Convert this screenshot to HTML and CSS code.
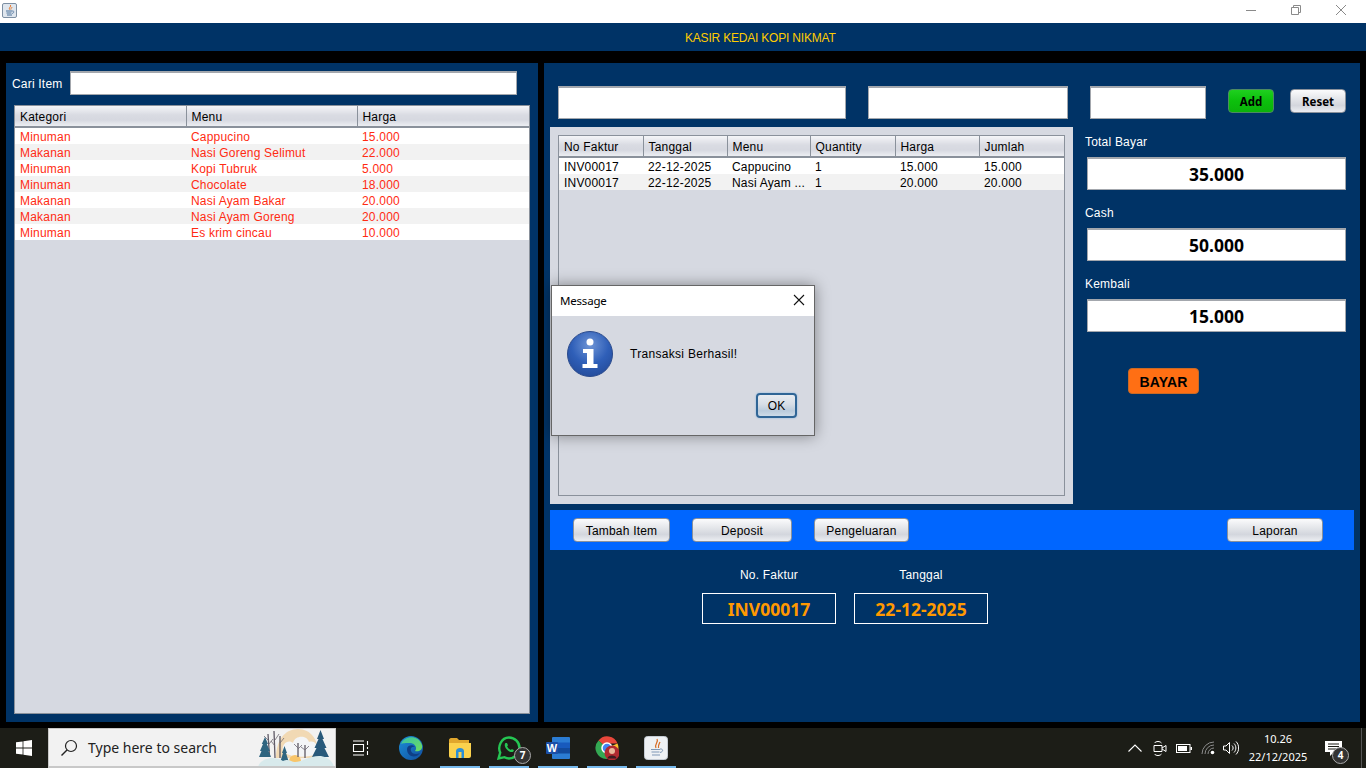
FILE: index.html
```html
<!DOCTYPE html>
<html lang="en">
<head>
    <meta charset="UTF-8">
    <title>Kasir Kedai Kopi Nikmat</title>
    <link rel="stylesheet" href="styles.css">
</head>
<body>

    <!-- Window title bar -->
    <div class="titlebar">
        <span class="app-icon">
            <svg width="15" height="15" viewBox="0 0 15 15">
                <rect x="0.5" y="0.5" width="14" height="14" rx="1.5" fill="#dfe6ee" stroke="#7d8fa3"/>
                <path d="M8.5 2C9.5 3.6 6.5 4.6 7.5 6.6M10 4C9.8 5.2 8.6 5.4 8.8 6.6" fill="none" stroke="#e8792b" stroke-width="1"/>
                <path d="M4 8H10M4.500 10H9.500M5 12H10" fill="none" stroke="#4b7099" stroke-width="1"/>
                <path d="M10 8C12.500 7.500 12.500 10 10 10.500" fill="none" stroke="#4b7099" stroke-width="0.8"/>
            </svg>
        </span>
        <div class="win-controls">
            <svg width="10" height="10" viewBox="0 0 10 10"><path d="M0 5.500H10" stroke="#8a8a8a"/></svg>
            <svg width="10" height="10" viewBox="0 0 10 10"><path d="M0.500 2.500H7.500V9.500H0.500ZM2.500 2.500V0.500H9.500V7.500H7.500" fill="none" stroke="#8a8a8a"/></svg>
            <svg width="10" height="10" viewBox="0 0 10 10"><path d="M0 0L10 10M10 0L0 10" stroke="#8a8a8a"/></svg>
        </div>
    </div>

    <!-- Header -->
    <div class="app-header">KASIR KEDAI KOPI NIKMAT</div>

    <div class="main">

        <!-- Item list -->
        <div class="panel left-panel">
            <div class="search-row">
                <label class="search-label">Cari Item</label>
                <input class="field search-input" type="text">
            </div>
            <div class="table-box item-table">
                <table>
                    <thead>
                        <tr><th>Kategori</th><th>Menu</th><th>Harga</th></tr>
                    </thead>
                    <tbody>
                        <tr><td>Minuman</td><td>Cappucino</td><td>15.000</td></tr>
                        <tr><td>Makanan</td><td>Nasi Goreng Selimut</td><td>22.000</td></tr>
                        <tr><td>Minuman</td><td>Kopi Tubruk</td><td>5.000</td></tr>
                        <tr><td>Minuman</td><td>Chocolate</td><td>18.000</td></tr>
                        <tr><td>Makanan</td><td>Nasi Ayam Bakar</td><td>20.000</td></tr>
                        <tr><td>Makanan</td><td>Nasi Ayam Goreng</td><td>20.000</td></tr>
                        <tr><td>Minuman</td><td>Es krim cincau</td><td>10.000</td></tr>
                    </tbody>
                </table>
            </div>
        </div>

        <!-- Transaction -->
        <div class="panel right-panel">
            <div class="entry-row">
                <input class="field entry-menu" type="text">
                <input class="field entry-price" type="text">
                <input class="field entry-qty" type="text">
                <button class="btn btn-add">Add</button>
                <button class="btn btn-reset">Reset</button>
            </div>

            <div class="middle-row">
                <div class="cart-panel">
                    <div class="table-box cart-table">
                        <table>
                            <thead>
                                <tr><th>No Faktur</th><th>Tanggal</th><th>Menu</th><th>Quantity</th><th>Harga</th><th>Jumlah</th></tr>
                            </thead>
                            <tbody>
                                <tr><td>INV00017</td><td>22-12-2025</td><td>Cappucino</td><td>1</td><td>15.000</td><td>15.000</td></tr>
                                <tr><td>INV00017</td><td>22-12-2025</td><td>Nasi Ayam ...</td><td>1</td><td>20.000</td><td>20.000</td></tr>
                            </tbody>
                        </table>
                    </div>
                </div>
                <div class="totals">
                    <div class="total-label">Total Bayar</div>
                    <div class="field total-value">35.000</div>
                    <div class="total-label">Cash</div>
                    <div class="field total-value">50.000</div>
                    <div class="total-label">Kembali</div>
                    <div class="field total-value">15.000</div>
                    <button class="btn-pay">BAYAR</button>
                </div>
            </div>

            <div class="action-bar">
                <button class="btn btn-tambah">Tambah Item</button>
                <button class="btn btn-deposit">Deposit</button>
                <button class="btn btn-keluar">Pengeluaran</button>
                <button class="btn btn-laporan">Laporan</button>
            </div>

            <div class="invoice-row">
                <div class="invoice-col">
                    <div class="invoice-label">No. Faktur</div>
                    <div class="invoice-box">INV00017</div>
                </div>
                <div class="invoice-col">
                    <div class="invoice-label">Tanggal</div>
                    <div class="invoice-box">22-12-2025</div>
                </div>
            </div>
        </div>
    </div>

    <!-- Taskbar -->
    <div class="taskbar">
        <div class="start">
            <svg width="16" height="16" viewBox="0 0 16 16"><path d="M0 2.300L6.600 1.400V7.600H0ZM7.400 1.300L16 0V7.600H7.400ZM0 8.400H6.600V14.600L0 13.700ZM7.400 8.400H16V16L7.400 14.700Z" fill="#fff"/></svg>
        </div>
        <div class="searchbox">
            <svg class="search-icon" width="18" height="18" viewBox="0 0 18 18"><circle cx="11" cy="7" r="5.500" fill="none" stroke="#222" stroke-width="1.200"/><path d="M7 11L1.500 16.500" stroke="#222" stroke-width="1.400"/></svg>
            <span class="search-text">Type here to search</span>
            <svg class="search-art" width="78" height="39" viewBox="0 0 78 39">
                <path d="M19 30C19 12 28 1 41 1C54 1 62 12 62 30Z" fill="#f1d9b4"/>
                <path d="M26 24C24 15 32 11 36 15C38 7 50 7 52 14C57 12 62 16 60 26C50 30 36 30 26 24Z" fill="#f3f5f7"/>
                <circle cx="38" cy="33" r="6" fill="#f8c56a"/>
                <path d="M11 6L12.500 28M17 3L18 30M23 8L23 30M41 15L41 29M48 17L48 30" stroke="#5f5a66" stroke-width="1.300" fill="none"/>
                <path d="M12 13L7 8M12 16L16 11M18 12L22 6M18 18L14 13M23 15L27 10M41 20L37 16M41 21L45 17M48 22L52 18M48 22L44 19" stroke="#6d6873" stroke-width="0.800" fill="none"/>
                <path d="M8 9L11 16L9.800 16L13 23L11.500 23L14 29H2L4.500 23L3 23L6 16L4.800 16Z" fill="#2f6580"/>
                <path d="M27.500 18L30 25L29 25L31.500 33H23.500L26 25L25 25Z" fill="#2f6580"/>
                <path d="M63.500 2L67 11L65.500 11L69.500 20L67.500 20L72 29H55L59.500 20L57.500 20L61.500 11L60 11Z" fill="#28597a"/>
                <path d="M1 39C3 31 16 27 26 33C32 30 34 34 38 34C44 34 54 27 64 28C70 29 76 33 77 39Z" fill="#d8eaec"/>
            </svg>
        </div>
        <div class="task-icon task-view">
            <svg width="17" height="16" viewBox="0 0 17 16"><path d="M1 1H12M1 15H12M1.500 4.500H11.500V11.500H1.500ZM15.500 1V5M15.500 7V9M15.500 11V15" fill="none" stroke="#fff" stroke-width="1.100"/></svg>
        </div>
        <div class="task-icon">
            <svg width="24" height="24" viewBox="0 0 24 24">
                <defs>
                    <linearGradient id="edgeA" x1="0" y1="0" x2="1" y2="1"><stop offset="0" stop-color="#37c3a8"/><stop offset="1" stop-color="#6fdc5e"/></linearGradient>
                    <linearGradient id="edgeB" x1="0" y1="0" x2="1" y2="1"><stop offset="0" stop-color="#1c8fd8"/><stop offset="1" stop-color="#114e9e"/></linearGradient>
                </defs>
                <circle cx="12" cy="12" r="12" fill="url(#edgeB)"/>
                <path d="M2 8C5 0 19 -2 23 9C24 14 20 16 16 15C19 11 15 7 11 7C7 7 3 7 2 8Z" fill="url(#edgeA)"/>
                <path d="M8 13C8 9 14 8 16 11C13 10 11 12 12 15C13 18 17 19 21 17C17 23 8 21 8 13Z" fill="#0f3f86"/>
            </svg>
        </div>
        <div class="task-icon running">
            <svg width="22" height="20" viewBox="0 0 22 20">
                <path d="M0 2C0 1 1 0 2 0H8L10 2H20V6H0Z" fill="#e0a72d"/>
                <path d="M0 5H22V18C22 19 21 20 20 20H2C1 20 0 19 0 18Z" fill="#fbd24d"/>
                <path d="M7 20V13C7 11 9 10 11 10C13 10 15 11 15 13V20H12.500V14H9.500V20Z" fill="#2b8fd6"/>
            </svg>
        </div>
        <div class="task-icon running">
            <svg width="24" height="24" viewBox="0 0 24 24">
                <path d="M1.500 22.500L3.200 16.500C0.500 11 4 1.500 12 1.500C18 1.500 22.500 6.500 22.500 12C22.500 18 17 22.500 12 22.500C10 22.500 8.800 22 7.500 21.200Z" fill="none" stroke="#25c653" stroke-width="2.400"/>
                <path d="M8.500 7C7.500 8 7.300 10 9 12.500C11 15 13.500 16.500 15.500 16C16.500 15.700 17 14.500 16.800 14L14.800 13C14.300 13.800 13.800 14 13.200 13.700C12 13 11 12 10.300 10.700C10 10.200 10.500 9.800 11 9.200L10 7Z" fill="#25c653"/>
            </svg>
            <span class="task-badge">7</span>
        </div>
        <div class="task-icon running">
            <svg width="24" height="22" viewBox="0 0 24 22">
                <rect x="6" y="0" width="18" height="22" rx="1" fill="#2b7cd3"/>
                <rect x="6" y="5.500" width="18" height="5.500" fill="#185abd"/>
                <rect x="6" y="11" width="18" height="5.500" fill="#124a9c"/>
                <rect x="0" y="5" width="12" height="12" rx="1" fill="#1b4fa8"/>
                <text x="6" y="15" class="word-letter" text-anchor="middle">W</text>
            </svg>
        </div>
        <div class="task-icon running">
            <svg width="24" height="24" viewBox="0 0 24 24">
                <path d="M12 12L3.500 4.500A11 11 0 0 1 22.500 7.500H12Z" fill="#e8473b"/>
                <path d="M12 12L22.500 7.500A11 11 0 0 1 12 23Z" fill="#fbc02d"/>
                <path d="M12 12L12 23A11 11 0 0 1 3.500 4.500Z" fill="#34a853"/>
                <circle cx="12" cy="12" r="5" fill="#4285f4" stroke="#fff" stroke-width="1.500"/>
                <circle cx="17" cy="17" r="7.500" fill="#b02a30"/>
                <circle cx="17" cy="15" r="3" fill="#e8b79a"/>
                <path d="M12.500 22.500C12.500 18.500 21.500 18.500 21.500 22.500Z" fill="#3a1d22"/>
            </svg>
        </div>
        <div class="task-icon running">
            <svg width="24" height="24" viewBox="0 0 24 24">
                <rect x="0.500" y="0.500" width="23" height="23" rx="3" fill="#eef1f4" stroke="#c5ccd4"/>
                <path d="M13 3C15 6 10 8 12 12M16 6C15 8 14 9 14.500 12" fill="none" stroke="#d8702a" stroke-width="1.300"/>
                <path d="M7 13.500H16M7.500 16H15.500M8 19H16" stroke="#7f98b5" stroke-width="1.200"/>
                <path d="M16 13C19.500 12.500 19.500 16 16 16.500" fill="none" stroke="#7f98b5"/>
            </svg>
        </div>

        <div class="tray">
            <svg class="tray-chevron" width="14" height="8" viewBox="0 0 14 8"><path d="M0.500 7.500L7 1L13.500 7.500" fill="none" stroke="#fff" stroke-width="1.100"/></svg>
            <svg class="tray-meet" width="14" height="17" viewBox="0 0 14 17"><path d="M1.500 3C3 1 7 1 8.500 3M1.500 14C3 16 7 16 8.500 14M1 5.500H9V11.500H1ZM9 8L13 5.500V11.500L9 9" fill="none" stroke="#fff"/></svg>
            <svg class="tray-battery" width="16" height="9" viewBox="0 0 16 9"><rect x="0.500" y="0.500" width="13.500" height="8" fill="none" stroke="#fff"/><rect x="2" y="2" width="9" height="5" fill="#fff"/><rect x="14.500" y="3" width="1.500" height="3" fill="#fff"/></svg>
            <svg class="tray-wifi" width="14" height="14" viewBox="0 0 14 14"><path d="M1 13A12 12 0 0 1 13 1M4 13A9 9 0 0 1 13 4M7 13A6 6 0 0 1 13 7" fill="none" stroke="#8c8c8c"/><circle cx="11.500" cy="11.500" r="1.800" fill="#fff"/></svg>
            <svg class="tray-volume" width="16" height="14" viewBox="0 0 16 14"><path d="M0.500 5V9H3L6.500 12.500V1.500L3 5ZM9 4.500C10.500 6 10.500 8 9 9.500M11 2.500C13.500 5 13.500 9 11 11.500M13 0.500C16.500 4 16.500 10 13 13.500" fill="none" stroke="#fff"/></svg>
            <div class="clock">
                <span>10.26</span>
                <span>22/12/2025</span>
            </div>
            <div class="notify">
                <svg width="17" height="15" viewBox="0 0 17 15"><path d="M0 0H17V11H9L5 15V11H0Z" fill="#fff"/><path d="M3 3H14M3 5.500H14M3 8H11" stroke="#1c1d17"/></svg>
                <span class="notify-badge">4</span>
            </div>
            <div class="show-desktop"></div>
        </div>
    </div>

    <!-- Message dialog -->
    <div class="dialog">
        <div class="dialog-title">
            <span>Message</span>
            <svg width="12" height="12" viewBox="0 0 12 12"><path d="M1 1L11 11M11 1L1 11" stroke="#111" stroke-width="1.100"/></svg>
        </div>
        <div class="dialog-body">
            <svg class="dialog-icon" width="46" height="46" viewBox="0 0 46 46">
                <defs>
                    <radialGradient id="infoBg" cx="0.500" cy="0.300" r="0.750"><stop offset="0" stop-color="#6f95d6"/><stop offset="0.550" stop-color="#2f5fb8"/><stop offset="1" stop-color="#234a98"/></radialGradient>
                </defs>
                <circle cx="23" cy="23" r="22.500" fill="url(#infoBg)" stroke="#2a4a8c"/>
                <circle cx="23" cy="11" r="3.500" fill="#fff"/>
                <path d="M16 18H26.500V33H30.500V37H15.500V33H20V22H16Z" fill="#fff"/>
            </svg>
            <span class="dialog-text">Transaksi Berhasil!</span>
        </div>
        <div class="dialog-actions">
            <button class="btn btn-ok">OK</button>
        </div>
    </div>

</body>
</html>
```

FILE: styles.css
```css
* {
    box-sizing: border-box;
}

body {
    margin: 0;
    width: 1366px;
    height: 768px;
    overflow: hidden;
    display: flex;
    flex-direction: column;
    background-color: #000;
    font-family: "Liberation Sans", Arial, sans-serif;
    font-size: 12px;
    letter-spacing: 0.2px;
    color: #000;
}

/* Title bar */
.titlebar {
    height: 23px;
    flex: none;
    display: flex;
    align-items: flex-start;
    justify-content: space-between;
    background-color: #fff;
}

.app-icon {
    display: block;
    margin: 3px 0 0 2px;
    height: 15px;
}

.win-controls {
    display: flex;
    gap: 35px;
    margin: 5px 20px 0 0;
}

.app-header {
    height: 28px;
    flex: none;
    padding-left: 685px;
    line-height: 31px;
    letter-spacing: -0.2px;
    background-color: #003366;
    color: #ffcc00;
}

.main {
    height: 677px;
    flex: none;
    display: flex;
    gap: 6px;
    padding: 12px 6px 6px;
}

.panel {
    background-color: #003366;
    display: flex;
    flex-direction: column;
}

.left-panel {
    width: 532px;
    padding: 8px 8px 8px 6px;
}

.right-panel {
    width: 816px;
}

.field {
    display: block;
    background-color: #fff;
    border: 1px solid #a3a7ad;
    border-top: 2px solid #a3a7ad;
    border-radius: 0;
    padding: 0;
    outline: none;
}

.search-row {
    display: flex;
    align-items: center;
    height: 24px;
}

.search-label {
    width: 58px;
    padding-top: 2px;
    color: #fff;
}

.search-input {
    width: 447px;
    height: 24px;
}

/* Tables */
.table-box {
    background-color: #d6d9e1;
    border: 1px solid #8a919b;
    overflow: hidden;
}

.item-table {
    flex: 1;
    margin: 10px 0 0 2px;
}

.table-box table {
    width: 100%;
    table-layout: fixed;
    border-collapse: collapse;
}

.table-box th {
    height: 21px;
    padding: 2px 0 0 5px;
    text-align: left;
    font-weight: normal;
    border-right: 1px solid #8a919b;
    border-bottom: 2px solid #8a919b;
    background: linear-gradient(#f4f5f8, #d9dbe2 45%, #d6d8e0 70%, #eceef2);
}

.table-box th:last-child {
    border-right: 0;
}

.item-table th:nth-child(1),
.item-table th:nth-child(2) {
    width: 171px;
}

.table-box td {
    height: 16px;
    padding: 2px 0 0 5px;
    line-height: 14px;
    white-space: nowrap;
    overflow: hidden;
    background-color: #fff;
}

.table-box tbody tr:nth-child(even) td {
    background-color: #f2f2f2;
}

.item-table td {
    color: #ff2b12;
}

/* Entry row */
.entry-row {
    display: flex;
    align-items: flex-start;
    height: 33px;
    margin-top: 23px;
    padding-left: 14px;
}

.entry-menu {
    width: 288px;
    height: 33px;
}

.entry-price {
    width: 200px;
    height: 33px;
    margin-left: 22px;
}

.entry-qty {
    width: 116px;
    height: 33px;
    margin-left: 22px;
}

.btn {
    display: block;
    height: 24px;
    padding: 1px 0 0;
    font-family: "Liberation Sans", Arial, sans-serif;
    font-size: 12px;
    letter-spacing: 0.2px;
    color: #000;
    border: 1px solid #8a919b;
    border-radius: 4px;
    background: linear-gradient(#fbfbfc, #e4e6ea 40%, #d3d6dd 70%, #eceef2);
}

.btn-add {
    width: 46px;
    margin: 3px 0 0 22px;
    font-family: "Noto Sans", sans-serif;
    font-size: 11.5px;
    font-weight: bold;
    letter-spacing: 0;
    border-color: #4d8a63;
    background: linear-gradient(#1fd01f, #0cc00c 50%, #0bb20b);
}

.btn-reset {
    width: 56px;
    margin: 3px 0 0 16px;
    font-family: "Noto Sans", sans-serif;
    font-size: 11.5px;
    font-weight: bold;
    letter-spacing: 0;
}

/* Cart and totals */
.middle-row {
    display: flex;
    margin: 8px 0 0 6px;
    height: 377px;
}

.cart-panel {
    width: 523px;
    padding: 8px;
    display: flex;
    background-color: #d6d9e1;
}

.cart-table {
    flex: 1;
}

.cart-table th:nth-child(1),
.cart-table th:nth-child(2),
.cart-table th:nth-child(5) {
    width: 84px;
}

.cart-table th:nth-child(3) {
    width: 83px;
}

.cart-table th:nth-child(4) {
    width: 85px;
}

.totals {
    flex: 1;
    padding: 7px 0 0 12px;
}

.total-label {
    height: 16px;
    line-height: 16px;
    margin-top: 15px;
    color: #fff;
}

.total-label:first-child {
    margin-top: 0;
}

.total-value {
    width: 259px;
    height: 33px;
    margin: 7px 0 0 2px;
    line-height: 31px;
    text-align: center;
    font-family: "Noto Sans", sans-serif;
    font-size: 17.5px;
    font-weight: bold;
    letter-spacing: 0;
}

.btn-pay {
    display: block;
    width: 71px;
    height: 26px;
    margin: 36px 0 0 43px;
    padding: 2px 0 0;
    font-family: "Liberation Sans", Arial, sans-serif;
    font-size: 14px;
    font-weight: bold;
    letter-spacing: 0.2px;
    color: #000;
    background-color: #ff6f14;
    border: 1px solid #c96a25;
    border-radius: 4px;
}

/* Blue action bar */
.action-bar {
    display: flex;
    align-items: center;
    width: 804px;
    height: 40px;
    margin: 6px 0 0 6px;
    padding: 0 31px 0 23px;
    background-color: #0066ff;
}

.btn-tambah {
    width: 97px;
}

.btn-deposit {
    width: 100px;
    margin-left: 22px;
}

.btn-keluar {
    width: 95px;
    margin-left: 22px;
}

.btn-laporan {
    width: 96px;
    margin-left: auto;
}

/* Invoice */
.invoice-row {
    display: flex;
    gap: 18px;
    margin: 17px 0 0 158px;
}

.invoice-col {
    width: 134px;
}

.invoice-label {
    height: 16px;
    line-height: 16px;
    text-align: center;
    color: #fff;
}

.invoice-box {
    height: 31px;
    margin-top: 10px;
    line-height: 31px;
    text-align: center;
    border: 1px solid #fff;
    color: #ff9900;
    font-family: "Noto Sans", sans-serif;
    font-size: 17.5px;
    font-weight: bold;
    letter-spacing: 0;
}

/* Taskbar */
.taskbar {
    height: 40px;
    flex: none;
    display: flex;
    align-items: stretch;
    background-color: #1c1d17;
    font-family: "Noto Sans", "Open Sans", sans-serif;
    letter-spacing: 0;
    color: #fff;
}

.start {
    width: 48px;
    display: flex;
    align-items: center;
    justify-content: center;
}

.searchbox {
    width: 288px;
    display: flex;
    align-items: center;
    background-color: #f2f2f2;
    border: 1px solid #c8c8c8;
    border-bottom-width: 2px;
    color: #222;
    overflow: hidden;
}

.search-icon {
    margin-left: 11px;
}

.search-text {
    margin-left: 10px;
    font-size: 14px;
}

.search-art {
    margin-left: auto;
    flex: none;
}

.task-icon {
    width: 49px;
    padding-right: 1px;
    display: flex;
    align-items: center;
    justify-content: center;
    position: relative;
}

.task-view {
    margin-right: 2px;
}

.running::after {
    content: "";
    position: absolute;
    left: 4px;
    right: 5px;
    bottom: 0;
    height: 2px;
    background-color: #76b9ed;
}

.word-letter {
    font-family: "Liberation Sans", Arial, sans-serif;
    font-size: 11px;
    font-weight: bold;
    fill: #fff;
}

.task-badge,
.notify-badge {
    position: absolute;
    width: 17px;
    height: 17px;
    border-radius: 50%;
    border: 1px solid #aaa;
    background-color: #333;
    color: #fff;
    font-size: 10px;
    font-weight: bold;
    line-height: 15px;
    text-align: center;
}

.task-badge {
    left: 29px;
    top: 19px;
}

.tray {
    flex: 1;
    display: flex;
    align-items: center;
    justify-content: flex-end;
}

.tray-meet {
    margin-left: 11px;
}

.tray-battery {
    margin-left: 9px;
}

.tray-wifi {
    margin-left: 9px;
}

.tray-volume {
    margin-left: 8px;
}

.clock {
    width: 70px;
    margin-left: 4px;
    display: flex;
    flex-direction: column;
    align-items: center;
    gap: 2px;
    font-size: 11px;
    line-height: 16px;
}

.notify {
    width: 48px;
    height: 100%;
    padding-right: 8px;
    display: flex;
    align-items: center;
    justify-content: center;
    position: relative;
}

.notify-badge {
    left: 19px;
    top: 19px;
}

.show-desktop {
    width: 5px;
    height: 100%;
    border-left: 1px solid #555;
}

/* Message dialog lies over the page */
.dialog {
    position: absolute;
    left: 551px;
    top: 285px;
    width: 264px;
    height: 151px;
    background-color: #d6d9e1;
    border: 1px solid #666;
    box-shadow: 0 0 14px rgba(0, 0, 0, 0.4);
}

.dialog-title {
    height: 30px;
    display: flex;
    align-items: center;
    justify-content: space-between;
    padding: 0 9px 2px 8px;
    background-color: #fff;
    font-family: "Noto Sans", "Open Sans", sans-serif;
    font-size: 11.5px;
    letter-spacing: -0.2px;
}

.dialog-body {
    display: flex;
    align-items: center;
    margin-top: 15px;
    padding-left: 15px;
}

.dialog-text {
    margin-left: 17px;
    letter-spacing: 0.3px;
}

.dialog-actions {
    display: flex;
    justify-content: flex-end;
    margin-top: 16px;
    padding-right: 17px;
}

.btn-ok {
    width: 41px;
    height: 25px;
    border: 2px solid #2f6596;
    box-shadow: 0 0 2px #7fb2e0;
    background: linear-gradient(#e8ecf1, #d6dde6 45%, #b9cbdc 75%, #cddbe8);
}
```
